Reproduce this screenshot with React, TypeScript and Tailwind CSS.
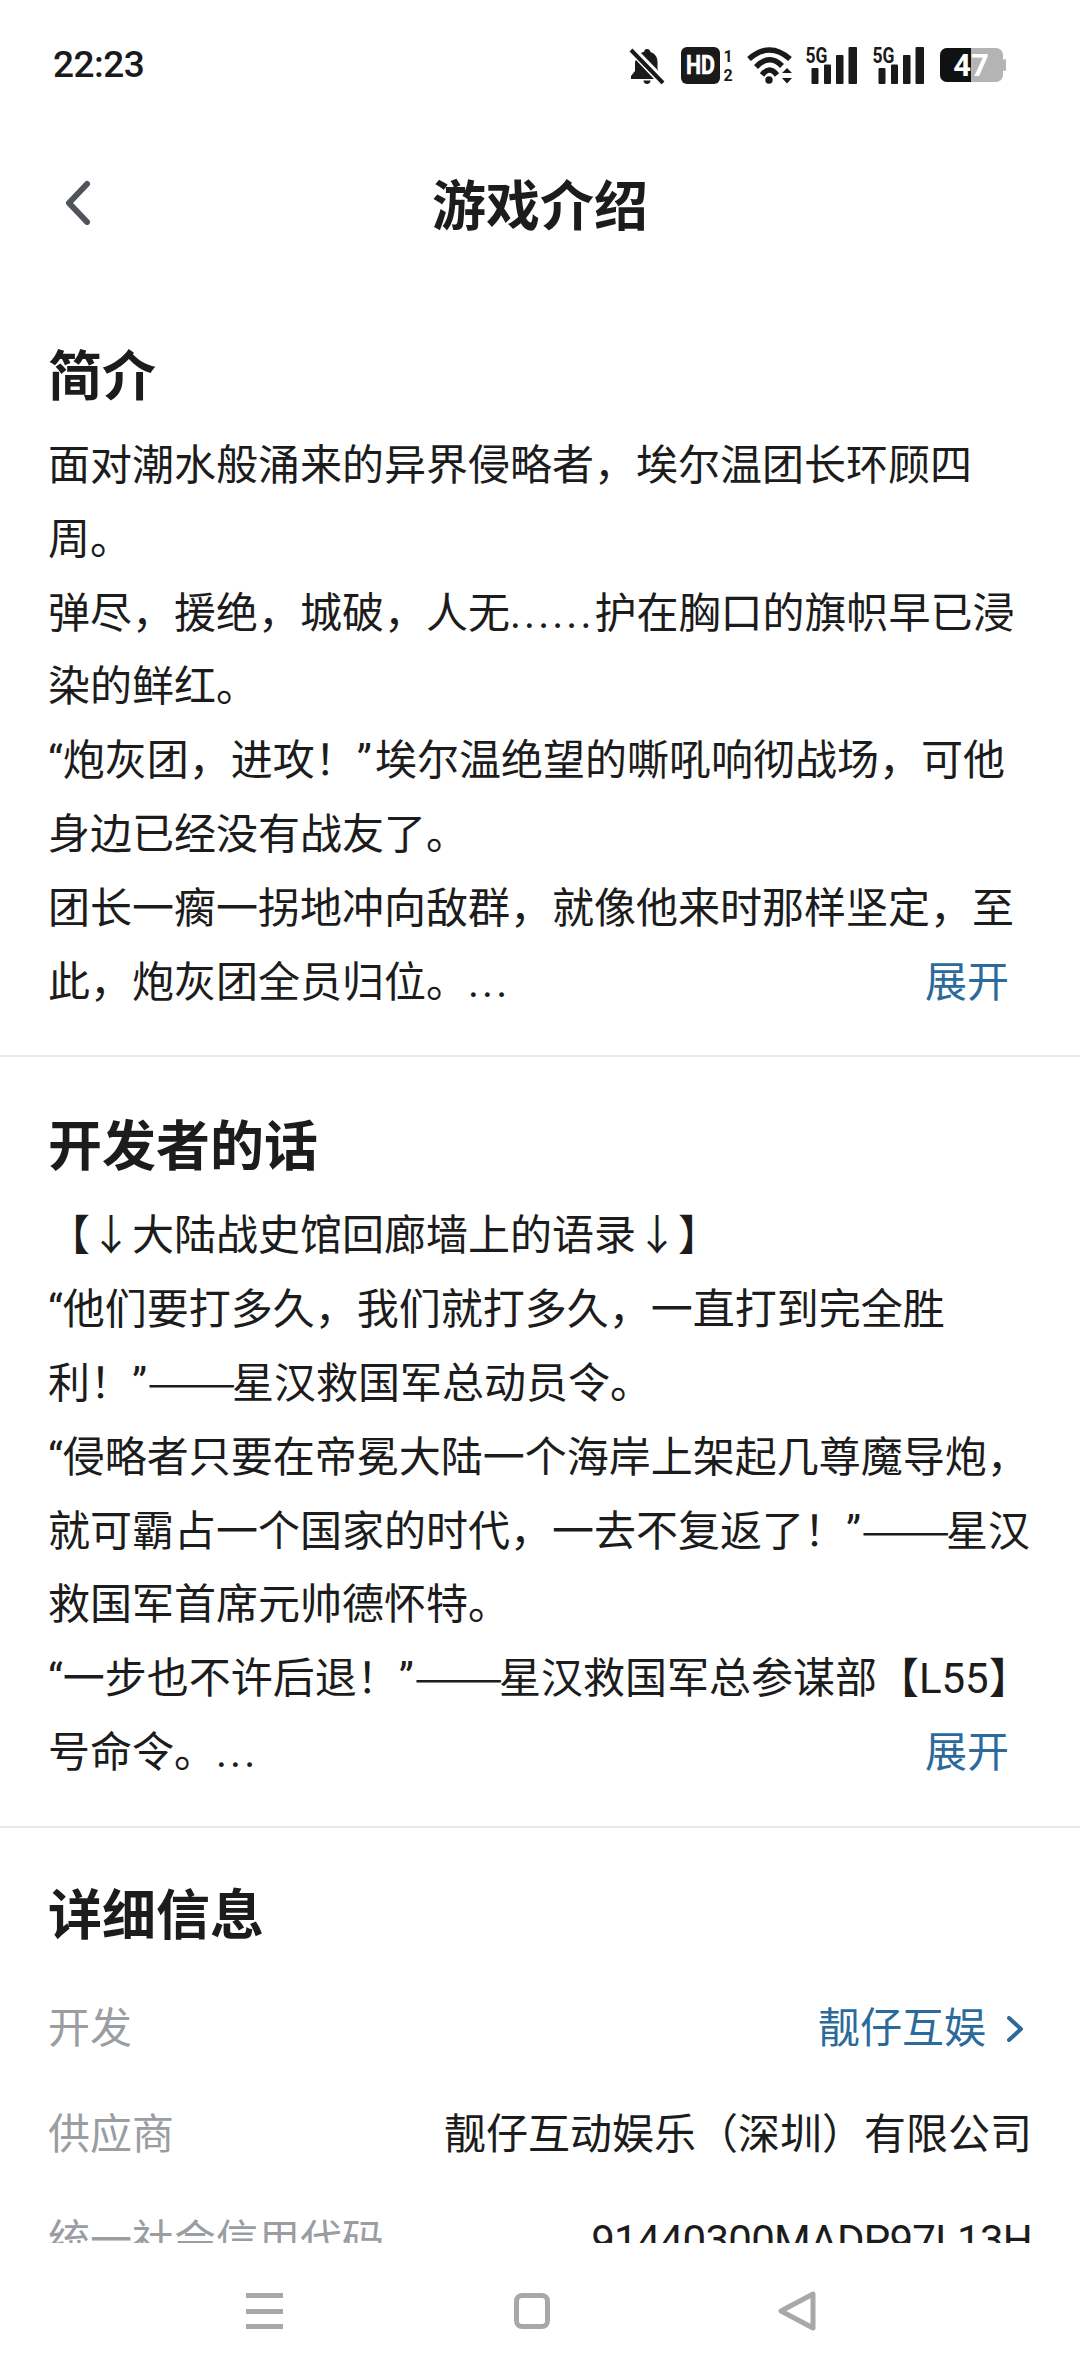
const dots = "tracking-[3px]";
const intro = [
  "面对潮水般涌来的异界侵略者，埃尔温团长环顾四",
  "周。",
  <>弹尽，援绝，城破，人无<span className={dots}>......</span>护在胸口的旗帜早已浸</>,
  "染的鲜红。",
  <>“炮灰团，进攻！<span className="pr-[3px]">”</span>埃尔温绝望的嘶吼响彻战场，可他</>,
  "身边已经没有战友了。",
  "团长一瘸一拐地冲向敌群，就像他来时那样坚定，至",
];
const dash = "font-['Noto_Sans_CJK_SC'] inline-block w-[85px] leading-none origin-left scale-x-[1.27]";
const dev = [
  "【↓大陆战史馆回廊墙上的语录↓】",
  "“他们要打多久，我们就打多久，一直打到完全胜",
  <>利！”<span className={dash}>——</span>星汉救国军总动员令。</>,
  "“侵略者只要在帝冕大陆一个海岸上架起几尊魔导炮，",
  <>就可霸占一个国家的时代，一去不复返了！”<span className={dash}>——</span>星汉</>,
  "救国军首席元帅德怀特。",
  <>“一步也不许后退！”<span className={dash}>——</span>星汉救国军总参谋部【L55】</>,
];

function Lines({ items, last }: { items: React.ReactNode[]; last: React.ReactNode }) {
  return (
    <div className="mt-[12px] text-[42px] leading-[73.8px] text-[#1c1c1c]">
      {items.map((t, i) => (
        <div key={i} className="whitespace-nowrap">{t}</div>
      ))}
      <div className="flex justify-between pr-[23px] whitespace-nowrap">
        <span>{last}</span>
        <span className="text-[#2b6a9b]">展开</span>
      </div>
    </div>
  );
}

function Signal() {
  return (
    <svg className="overflow-visible" width="52" height="37" viewBox="0 0 52 37" fill="#1a1a1a">
      <rect x="6.500" y="21" width="7" height="16" rx="1" />
      <rect x="19" y="17.500" width="7" height="19.500" rx="1" />
      <rect x="31" y="8" width="7.500" height="29" rx="1" />
      <rect x="43.500" y="0" width="8.500" height="37" rx="1" />
      <text x="0.500" y="16" fontSize="22" fontWeight="700" fontFamily="Roboto, sans-serif" textLength="22" lengthAdjust="spacingAndGlyphs">5G</text>
    </svg>
  );
}

function Row({ label, children }: { label: string; children: React.ReactNode }) {
  return (
    <div className="flex justify-between items-center h-[106px] whitespace-nowrap">
      <span className="text-[#9a9da1]">{label}</span>
      {children}
    </div>
  );
}

export default function App() {
  return (
    <div className="w-[1080px] h-[2376px] flex flex-col bg-white overflow-hidden" style={{ fontFamily: 'Roboto, "Noto Sans CJK SC", sans-serif' }}>
      <div className="h-[130px] shrink-0 flex items-center justify-between pl-[53px] pr-[74px]">
        <span className="text-[37px] font-medium text-[#1a1a1a] tracking-[-0.5px]">22:23</span>
        <div className="flex items-center">
          <svg width="36" height="37" viewBox="0 0 36 37" fill="#1a1a1a">
            <path d="M18 2c2 0 3 1 3.500 3 4.500 1.500 7 5 7 10v7l1 2L12 6c1-1 2-.8 3-1 .5-2 1-3 3-3z" />
            <path d="M7 13l18 19H2v-3l4-5v-9c0-.8.500-1.500 1-2z" />
            <path d="M14.500 33.500h7c0 2-1.500 3.500-3.500 3.500s-3.500-1.500-3.500-3.500z" />
            <path d="M2 3l32 33" stroke="#1a1a1a" strokeWidth="4" />
          </svg>
          <svg className="ml-[16px] overflow-visible" width="51" height="37" viewBox="0 0 51 37">
            <rect width="39" height="37" rx="6" fill="#1a1a1a" />
            <text x="5" y="26.500" fontSize="25" fontWeight="700" fill="#fff" stroke="#fff" strokeWidth="0.6" fontFamily="Roboto, sans-serif" textLength="29" lengthAdjust="spacingAndGlyphs">HD</text>
            <text x="47" y="15" textAnchor="middle" fontSize="16" fontWeight="700" fill="#1a1a1a" fontFamily="Roboto, sans-serif">1</text>
            <text x="47" y="34" textAnchor="middle" fontSize="16" fontWeight="700" fill="#1a1a1a" fontFamily="Roboto, sans-serif">2</text>
          </svg>
          <svg className="ml-[15px]" width="46" height="37" viewBox="0 0 46 37" fill="none" stroke="#1a1a1a" strokeWidth="5.500">
            <path d="M2 12Q22.500 -6 43 12" />
            <path d="M9 20Q22.500 6 35 19" />
            <path d="M15 28Q22.500 18 30 28" />
            <circle cx="22" cy="33" r="3.700" fill="#1a1a1a" stroke="none" />
            <path d="M35 26l5-5 5 5zM35 31l5 5.500 5-5.500z" fill="#1a1a1a" stroke="none" />
          </svg>
          <div className="ml-[12px]"><Signal /></div>
          <div className="ml-[15px]"><Signal /></div>
          <svg className="ml-[16px] overflow-visible" width="66" height="36" viewBox="0 0 66 36">
            <rect x="0" y="1" width="63" height="34" rx="7" fill="#b4b4b4" />
            <path d="M7 1h24v34H7a7 7 0 0 1-7-7V8a7 7 0 0 1 7-7z" fill="#111" />
            <rect x="63" y="12" width="3" height="12" rx="1.500" fill="#b4b4b4" />
            <text x="31" y="29" textAnchor="middle" fontSize="31" fontWeight="700" fill="#fff" fontFamily="Roboto, sans-serif">47</text>
          </svg>
        </div>
      </div>

      <div className="h-[152px] shrink-0 relative flex items-center justify-center">
        <svg className="absolute left-[64px] top-[50px]" width="28" height="46" viewBox="0 0 28 46" fill="none" stroke="#50545a" strokeWidth="6" strokeLinecap="round" strokeLinejoin="round">
          <path d="M23 4 5 23l18 19" />
        </svg>
        <span className="text-[54px] font-bold text-[#1c1c1c] pt-[2px]">游戏介绍</span>
      </div>

      <main className="flex-1 min-h-0 overflow-hidden">
        <section className="px-[48px] pt-[57px] pb-[36px] border-b-2 border-[#e9e9e9]">
          <h2 className="text-[54px] leading-[78px] font-bold text-[#1c1c1c]">简介</h2>
          <Lines items={intro} last={<>此，炮灰团全员归位。<span className={dots}>...</span></>} />
        </section>
        <section className="px-[48px] pt-[52px] pb-[36px] border-b-2 border-[#e9e9e9]">
          <h2 className="text-[54px] leading-[78px] font-bold text-[#1c1c1c]">开发者的话</h2>
          <Lines items={dev} last={<>号命令。<span className={dots}>...</span></>} />
        </section>
        <section className="px-[48px] pt-[50px] text-[42px]">
          <h2 className="text-[54px] leading-[78px] font-bold text-[#1c1c1c]">详细信息</h2>
          <div className="mt-[20px] text-[#1c1c1c]">
            <Row label="开发">
              <span className="flex items-center text-[#2b6a9b] pr-[8px]">
                靓仔互娱
                <svg className="ml-[20px]" width="18" height="26" viewBox="0 0 18 26" fill="none" stroke="#2b6a9b" strokeWidth="4" strokeLinecap="round" strokeLinejoin="round">
                  <path d="M3 2l12 11L3 24" />
                </svg>
              </span>
            </Row>
            <Row label="供应商"><span>靓仔互动娱乐（深圳）有限公司</span></Row>
            <Row label="统一社会信用代码"><span className="tracking-[-0.75px]">91440300MADP97L13H</span></Row>
          </div>
        </section>
      </main>

      <nav className="h-[133px] shrink-0 bg-white pt-[48px] pl-[246px]">
        <div className="flex items-center">
          <div className="flex flex-col justify-between w-[37px] h-[36px]">
            <div className="h-[5px] bg-[#a8a8a8]" />
            <div className="h-[5px] bg-[#a8a8a8]" />
            <div className="h-[5px] bg-[#a8a8a8]" />
          </div>
          <div className="ml-[231px] w-[36px] h-[36px] rounded-[8px] border-[5px] border-[#a8a8a8]" />
          <svg className="ml-[228px]" width="38" height="40" viewBox="0 0 38 40" fill="none" stroke="#a8a8a8" strokeWidth="5" strokeLinejoin="round">
            <path d="M35 3v34L3 20z" />
          </svg>
        </div>
      </nav>
    </div>
  );
}
